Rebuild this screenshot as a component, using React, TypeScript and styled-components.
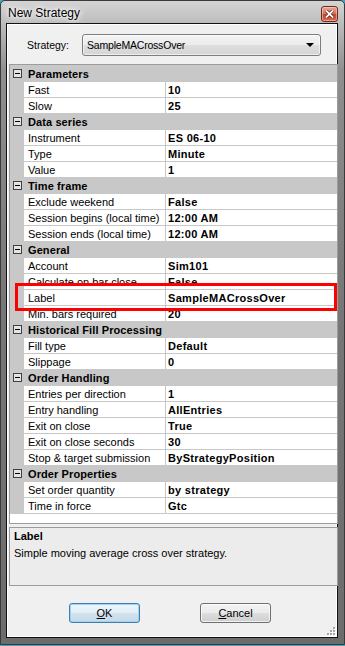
import React from "react";
import styled, { createGlobalStyle } from "styled-components";

const GlobalStyle = createGlobalStyle`
  html, body { margin: 0; padding: 0; }
  body {
    background: #3aa6c0;
    font-family: "Liberation Sans", Arial, sans-serif;
    -webkit-font-smoothing: none;
  }
  * { box-sizing: border-box; }
`;

const Window = styled.div`
  width: 345px;
  height: 645px;
  display: flex;
  flex-direction: column;
  padding: 0 6px 6px 5px;
  border: 1px solid #3a3a3a;
  border-radius: 5px 5px 0 0;
  background: linear-gradient(
    to bottom,
    #d4d4d4 0px,
    #bdbdbd 22px,
    #8f8f8f 70px,
    #777777 300px,
    #6c6c6c 100%
  );
`;

const TitleBar = styled.div`
  height: 22px;
  display: flex;
  align-items: center;
  padding-left: 3px;
  margin-left: -1px;
`;

const TitleText = styled.span`
  font-size: 12px;
  color: #000;
  text-shadow: 0 0 6px #fff, 0 0 3px #fff, 0 0 10px #f4f4f4;
  margin-top: 1px;
`;

const CloseButton = styled.div`
  margin-left: auto;
  margin-top: 4px;
  margin-right: 0px;
  width: 17px;
  height: 16px;
  border: 1px solid #6e2a1e;
  border-radius: 3px;
  background: linear-gradient(to bottom, #e8a898 0%, #d9785f 45%, #c4462b 55%, #d86a4d 100%);
  display: flex;
  align-items: center;
  justify-content: center;
  box-shadow: inset 0 0 0 1px rgba(255, 220, 210, 0.5);
`;

const Client = styled.div`
  position: relative;
  flex: 1;
  display: flex;
  flex-direction: column;
  border: 1px solid #111;
  box-shadow: inset 0 0 0 1px #ffffff;
  background: #f0f0f0;
  padding: 0 1px 1px 2px;
`;

const StrategyRow = styled.div`
  display: flex;
  align-items: center;
  margin-top: 10px;
  margin-bottom: 8px;
  padding: 0 15px 0 18px;
`;

const StrategyLabel = styled.label`
  width: 55px;
  font-size: 10.5px;
  color: #000;
`;

const Combo = styled.div`
  flex: 1;
  height: 22px;
  border: 1px solid #7d7d7d;
  border-radius: 3px;
  background: linear-gradient(to bottom, #f4f4f4 0%, #ececec 48%, #dedede 52%, #d4d4d4 100%);
  display: flex;
  align-items: center;
  padding: 0 6px 0 4px;
  box-shadow: inset 0 0 0 1px rgba(255, 255, 255, 0.6);
`;

const ComboText = styled.span`
  flex: 1;
  font-size: 10.5px;
  letter-spacing: -0.2px;
  color: #000;
`;

const ComboArrow = styled.span`
  width: 0;
  height: 0;
  border-left: 4px solid transparent;
  border-right: 4px solid transparent;
  border-top: 4px solid #000;
`;

const Grid = styled.div`
  position: relative;
  height: 460px;
  width: 329px;
  border: 1px solid #9c9c9c;
  background: #fff;
  display: flex;
  flex-direction: column;
`;

const GridRows = styled.div`
  border-top: 1px solid #c8c8c8;
`;

const CategoryRow = styled.div`
  height: 16px;
  display: flex;
  align-items: center;
  background: #c8c8c8;
  border-bottom: 1px solid #c8c8c8;
  padding-left: 3px;
`;

const ExpandBox = styled.span`
  position: relative;
  width: 9px;
  height: 9px;
  border: 1px solid #404040;
  background: #e4e4e4;
  margin-right: 6px;
  &::after {
    content: "";
    position: absolute;
    left: 1px;
    top: 3px;
    width: 5px;
    height: 1px;
    background: #000;
  }
`;

const CategoryLabel = styled.span`
  font-size: 11px;
  font-weight: bold;
  letter-spacing: 0.1px;
  color: #000;
  line-height: 15px;
  height: 15px;
  padding-top: 1px;
`;

const PropRow = styled.div`
  height: 16px;
  display: grid;
  grid-template-columns: 14px 142px 171px;
  border-bottom: 1px solid #c8c8c8;
`;

const MarginCell = styled.div`
  background: #c8c8c8;
`;

const NameCell = styled.div`
  border-right: 1px solid #c8c8c8;
  padding-left: 4px;
  font-size: 11px;
  line-height: 16px;
  color: #000;
  white-space: nowrap;
  overflow: hidden;
`;

const ValueCell = styled.div`
  padding-left: 2px;
  font-size: 11px;
  font-weight: bold;
  letter-spacing: 0.3px;
  line-height: 16px;
  color: #000;
  white-space: nowrap;
  overflow: hidden;
`;

const GridFiller = styled.div`
  flex: 1;
  background: #fff;
`;

const Highlight = styled.div`
  position: absolute;
  left: 5px;
  top: 218px;
  width: 322px;
  height: 28px;
  border: 3px solid #ff0000;
  pointer-events: none;
`;

const Description = styled.div`
  margin-top: 3px;
  width: 329px;
  height: 59px;
  border: 1px solid #9c9c9c;
  background: #ececec;
  padding: 2px 4px 0 4px;
`;

const DescTitle = styled.div`
  font-size: 11px;
  font-weight: bold;
  line-height: 13px;
  color: #000;
  margin-bottom: 4px;
`;

const DescText = styled.div`
  font-size: 11px;
  line-height: 13px;
  color: #000;
`;

const ButtonBar = styled.div`
  display: flex;
  gap: 60px;
  margin-top: 17px;
  padding-left: 60px;
`;

const DialogButton = styled.button<{ $default?: boolean }>`
  width: 71px;
  height: 20px;
  padding: 0;
  font-family: "Liberation Sans", Arial, sans-serif;
  font-size: 11px;
  color: #000;
  border-radius: 3px;
  border: 1px solid ${(p) => (p.$default ? "#3c7fb1" : "#707070")};
  background: ${(p) =>
    p.$default
      ? "linear-gradient(to bottom, #eef6fb 0%, #e2eef6 48%, #d2e3ee 52%, #c6d9e6 100%)"
      : "linear-gradient(to bottom, #f4f4f4 0%, #ebebeb 48%, #dddddd 52%, #cfcfcf 100%)"};
  box-shadow: inset 0 0 0 1px ${(p) => (p.$default ? "#9fd3f2" : "rgba(255,255,255,0.7)")};
  u { text-decoration: underline; }
`;

const ResizeGrip = styled.svg`
  position: absolute;
  right: 1px;
  bottom: 1px;
`;

type Cat = { name: string; items: [string, string][] };

const categories: Cat[] = [
  { name: "Parameters", items: [["Fast", "10"], ["Slow", "25"]] },
  {
    name: "Data series",
    items: [
      ["Instrument", "ES 06-10"],
      ["Type", "Minute"],
      ["Value", "1"],
    ],
  },
  {
    name: "Time frame",
    items: [
      ["Exclude weekend", "False"],
      ["Session begins (local time)", "12:00 AM"],
      ["Session ends (local time)", "12:00 AM"],
    ],
  },
  {
    name: "General",
    items: [
      ["Account", "Sim101"],
      ["Calculate on bar close", "False"],
      ["Label", "SampleMACrossOver"],
      ["Min. bars required", "20"],
    ],
  },
  {
    name: "Historical Fill Processing",
    items: [
      ["Fill type", "Default"],
      ["Slippage", "0"],
    ],
  },
  {
    name: "Order Handling",
    items: [
      ["Entries per direction", "1"],
      ["Entry handling", "AllEntries"],
      ["Exit on close", "True"],
      ["Exit on close seconds", "30"],
      ["Stop & target submission", "ByStrategyPosition"],
    ],
  },
  {
    name: "Order Properties",
    items: [
      ["Set order quantity", "by strategy"],
      ["Time in force", "Gtc"],
    ],
  },
];

export default function App() {
  return (
    <>
      <GlobalStyle />
      <Window>
        <TitleBar>
          <TitleText>New Strategy</TitleText>
          <CloseButton>
            <svg width="9" height="8" viewBox="0 0 9 8">
              <path d="M1 0.5 L8 7.5 M8 0.5 L1 7.5" stroke="#5a1a10" strokeWidth="3.2" />
              <path d="M1 0.5 L8 7.5 M8 0.5 L1 7.5" stroke="#ffffff" strokeWidth="1.8" />
            </svg>
          </CloseButton>
        </TitleBar>
        <Client>
          <StrategyRow>
            <StrategyLabel>Strategy:</StrategyLabel>
            <Combo>
              <ComboText>SampleMACrossOver</ComboText>
              <ComboArrow />
            </Combo>
          </StrategyRow>
          <Grid>
            <GridRows>
              {categories.map((c) => (
                <React.Fragment key={c.name}>
                  <CategoryRow>
                    <ExpandBox />
                    <CategoryLabel>{c.name}</CategoryLabel>
                  </CategoryRow>
                  {c.items.map(([n, v]) => (
                    <PropRow key={n}>
                      <MarginCell />
                      <NameCell>{n}</NameCell>
                      <ValueCell>{v}</ValueCell>
                    </PropRow>
                  ))}
                </React.Fragment>
              ))}
            </GridRows>
            <GridFiller />
            <Highlight />
          </Grid>
          <Description>
            <DescTitle>Label</DescTitle>
            <DescText>Simple moving average cross over strategy.</DescText>
          </Description>
          <ButtonBar>
            <DialogButton $default>
              <u>O</u>K
            </DialogButton>
            <DialogButton>
              <u>C</u>ancel
            </DialogButton>
          </ButtonBar>
          <ResizeGrip width="10" height="10" viewBox="0 0 10 10">
            {[
              [7, 1],
              [4, 4],
              [7, 4],
              [1, 7],
              [4, 7],
              [7, 7],
            ].map(([x, y]) => (
              <React.Fragment key={`${x}-${y}`}>
                <rect x={x + 1} y={y + 1} width="2" height="2" fill="#ffffff" />
                <rect x={x} y={y} width="2" height="2" fill="#a6a6a6" />
              </React.Fragment>
            ))}
          </ResizeGrip>
        </Client>
      </Window>
    </>
  );
}
